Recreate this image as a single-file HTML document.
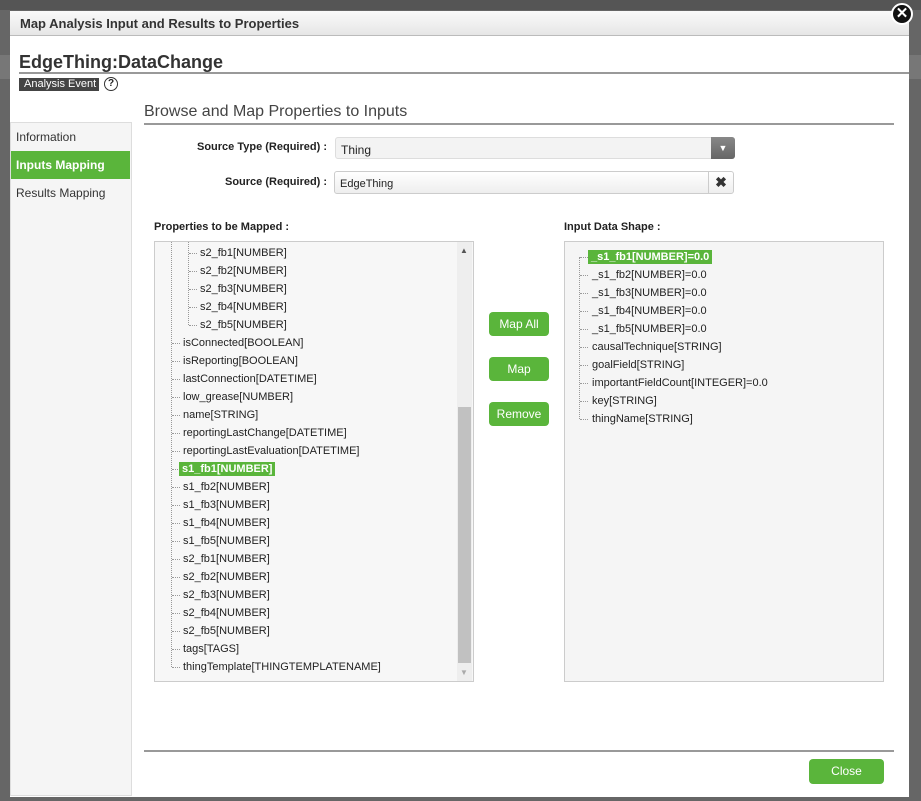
<!DOCTYPE html>
<html><head><meta charset="utf-8"><style>
*{margin:0;padding:0;box-sizing:border-box}
body{width:921px;height:801px;background:#666;position:relative;overflow:hidden;font-family:"Liberation Sans",Arial,sans-serif;color:#222}
.a{position:absolute}
.dlg{left:10px;top:11px;width:899px;height:786px;background:#fff}
.tb{left:10px;top:11px;width:899px;height:25px;background:linear-gradient(#fafafa,#e6e6e6);border-bottom:1px solid #bbb;font-size:13px;font-weight:bold;color:#333;padding:5px 10px}
.row{position:absolute;font-size:11px;line-height:14px;white-space:nowrap}
.dot{position:absolute;border-top:1px dotted #999;width:8px}
.vd{position:absolute;border-left:1px dotted #999}
.hl{background:#5ab53b;color:#fff;font-weight:bold;padding:0 3px}
.btn{position:absolute;background:#5ab53b;color:#fff;font-size:12px;text-align:center;border-radius:4px;line-height:24px}
.lbl{position:absolute;font-size:11px;font-weight:bold;color:#222}
</style></head><body>
<div class="a" style="left:0;top:0;width:921px;height:10px;background:#555"></div>
<div class="a" style="left:0;top:55px;width:921px;height:24px;background:#777"></div>
<div class="a dlg"></div>
<div class="a tb">Map Analysis Input and Results to Properties</div>
<div class="a" style="left:891px;top:3px;width:22px;height:22px;border-radius:50%;background:#111;border:2px solid #fff;color:#fff;font-size:15px;font-weight:bold;text-align:center;line-height:17px">✕</div>
<div class="a" style="left:19px;top:52px;font-size:18px;font-weight:bold;color:#333">EdgeThing:DataChange</div>
<div class="a" style="left:19px;top:72px;width:890px;height:2px;background:#999"></div>
<div class="a" style="left:19px;top:78px;width:80px;height:13px;background:#444;color:#fff;font-size:11px;line-height:13px;padding-left:5px">Analysis Event</div>
<div class="a" style="left:104px;top:77px;width:14px;height:14px;border:1.5px solid #333;border-radius:50%;font-size:10px;font-weight:bold;text-align:center;line-height:11px">?</div>
<div class="a" style="left:144px;top:103px;font-size:16px;color:#444">Browse and Map Properties to Inputs</div>
<div class="a" style="left:144px;top:123px;width:750px;height:2px;background:#999"></div>
<div class="a" style="left:10px;top:122px;width:122px;height:674px;background:#f5f5f5;border:1px solid #ddd"></div>
<div class="a" style="left:16px;top:130px;font-size:12px;color:#333">Information</div>
<div class="a" style="left:11px;top:151px;width:119px;height:28px;background:#5ab53b;color:#fff;font-size:12px;font-weight:bold;padding:7px 5px">Inputs Mapping</div>
<div class="a" style="left:16px;top:186px;font-size:12px;color:#333">Results Mapping</div>
<div class="lbl" style="left:197px;top:141px">Source Type (Required) :</div>
<div class="a" style="left:335px;top:137px;width:400px;height:22px;background:#f3f3f3;border:1px solid #ddd;border-radius:3px;font-size:12px;padding:5px 5px">Thing</div>
<div class="a" style="left:711px;top:137px;width:24px;height:22px;background:linear-gradient(#888,#666);border-radius:0 3px 3px 0;color:#fff;font-size:9px;text-align:center;line-height:22px">▼</div>
<div class="lbl" style="left:225px;top:176px">Source (Required) :</div>
<div class="a" style="left:334px;top:171px;width:400px;height:23px;background:linear-gradient(#fff,#eee);border:1px solid #ccc;border-radius:3px;font-size:11px;padding:6px 5px">EdgeThing</div>
<div class="a" style="left:708px;top:172px;width:25px;height:21px;border-left:1px solid #ccc;font-size:14px;font-weight:bold;text-align:center;line-height:21px;color:#333">✖</div>
<div class="lbl" style="left:154px;top:221px">Properties to be Mapped :</div>
<div class="lbl" style="left:564px;top:221px">Input Data Shape :</div>
<div class="a" style="left:154px;top:241px;width:320px;height:441px;background:#f7f7f7;border:1px solid #ccc"></div>
<div class="a" style="left:457px;top:242px;width:15px;height:439px;background:#eee"></div>
<div class="a" style="left:458px;top:407px;width:13px;height:256px;background:#c1c1c1"></div>
<div class="a" style="left:460px;top:246px;font-size:8px;color:#555">▲</div>
<div class="a" style="left:460px;top:668px;font-size:8px;color:#aaa">▼</div>
<div class="a" style="left:564px;top:241px;width:320px;height:441px;background:#f5f5f5;border:1px solid #ccc"></div>
<div class="btn" style="left:489px;top:312px;width:60px">Map All</div>
<div class="btn" style="left:489px;top:357px;width:60px">Map</div>
<div class="btn" style="left:489px;top:402px;width:60px">Remove</div>
<div class="a" style="left:144px;top:750px;width:750px;height:2px;background:#999"></div>
<div class="btn" style="left:809px;top:759px;width:75px;height:25px;font-size:12px">Close</div>
<div id="L"></div>
<script>
(function(){
var L=document.getElementById('L'),h='';
var nested=['s2_fb1[NUMBER]','s2_fb2[NUMBER]','s2_fb3[NUMBER]','s2_fb4[NUMBER]','s2_fb5[NUMBER]'];
var tops=['isConnected[BOOLEAN]','isReporting[BOOLEAN]','lastConnection[DATETIME]','low_grease[NUMBER]','name[STRING]','reportingLastChange[DATETIME]','reportingLastEvaluation[DATETIME]','*s1_fb1[NUMBER]','s1_fb2[NUMBER]','s1_fb3[NUMBER]','s1_fb4[NUMBER]','s1_fb5[NUMBER]','s2_fb1[NUMBER]','s2_fb2[NUMBER]','s2_fb3[NUMBER]','s2_fb4[NUMBER]','s2_fb5[NUMBER]','tags[TAGS]','thingTemplate[THINGTEMPLATENAME]'];
h+='<div class="vd" style="left:171px;top:242px;height:425px"></div><div class="vd" style="left:188px;top:242px;height:83px"></div>';
nested.forEach(function(t,i){var y=253+18*i;h+='<div class="dot" style="left:189px;top:'+y+'px"></div><div class="row" style="left:200px;top:'+(y-7)+'px">'+t+'</div>';});
tops.forEach(function(t,i){var y=343+18*i;var s=t[0]=='*';t=s?t.slice(1):t;h+='<div class="dot" style="left:172px;top:'+y+'px"></div><div class="row'+(s?' hl':'')+'" style="left:'+(s?179:183)+'px;top:'+(y-7)+'px">'+t+'</div>';});
var r=['*_s1_fb1[NUMBER]=0.0','_s1_fb2[NUMBER]=0.0','_s1_fb3[NUMBER]=0.0','_s1_fb4[NUMBER]=0.0','_s1_fb5[NUMBER]=0.0','causalTechnique[STRING]','goalField[STRING]','importantFieldCount[INTEGER]=0.0','key[STRING]','thingName[STRING]'];
h+='<div class="vd" style="left:579px;top:257px;height:162px"></div>';
r.forEach(function(t,i){var y=257+18*i;var s=t[0]=='*';t=s?t.slice(1):t;h+='<div class="dot" style="left:580px;top:'+y+'px"></div><div class="row'+(s?' hl':'')+'" style="left:'+(s?588:592)+'px;top:'+(y-7)+'px">'+t+'</div>';});
L.innerHTML=h;
})();
</script>
</body></html>
